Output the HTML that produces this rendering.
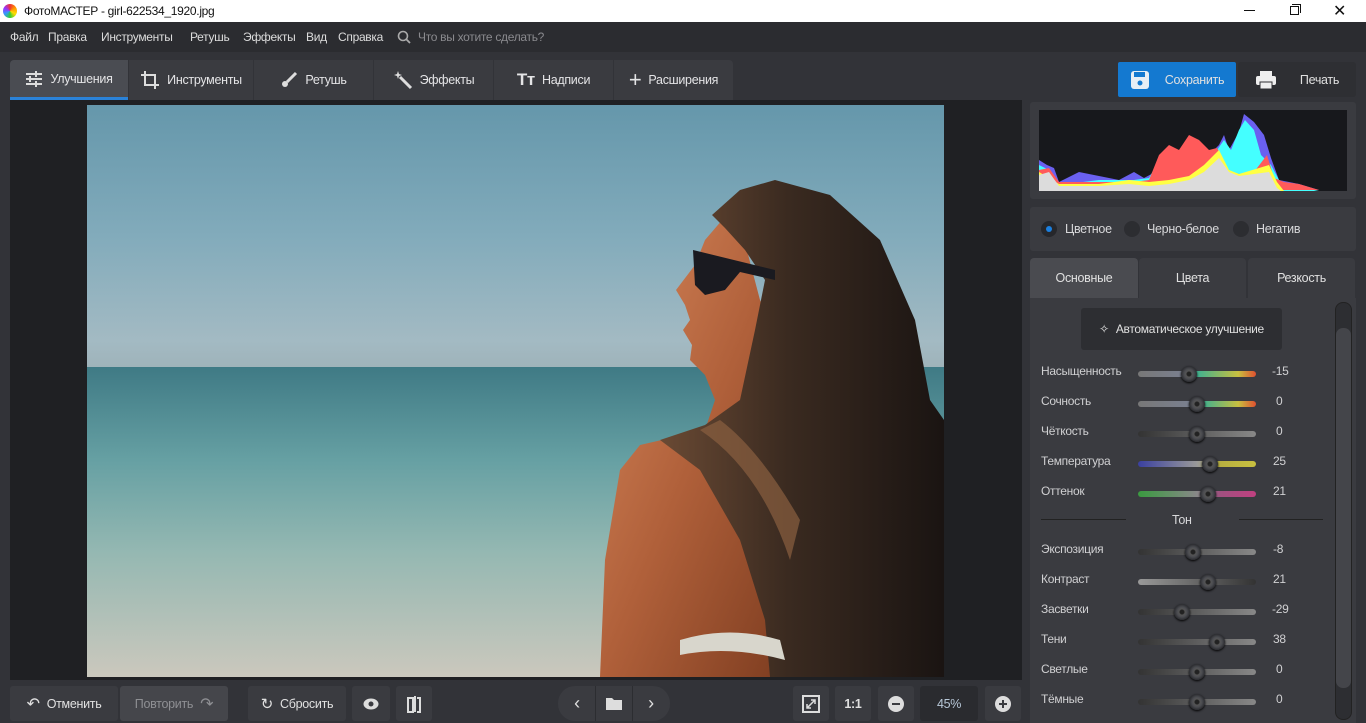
<!DOCTYPE html>
<html><head><meta charset="utf-8"><style>
*{margin:0;padding:0;box-sizing:border-box}
body{width:1366px;height:723px;overflow:hidden;background:#323338;font-family:"Liberation Sans","DejaVu Sans",sans-serif;font-size:12.5px;letter-spacing:-0.3px;color:#d8d8da;position:relative}
.abs{position:absolute}
.title{left:0;top:0;width:1366px;height:22px;background:#fff;color:#111;font-size:12px}
.menu{left:0;top:22px;width:1366px;height:30px;background:#2b2c30}
.menu span{position:absolute;top:8px;font-size:12px;color:#dcdcdc}
.tb{top:60px;height:40px;background:#3a3b40;color:#e4e4e6;display:flex;align-items:center;justify-content:center;gap:7px;font-size:12.5px}
.btn{background:#3a3b40;border-radius:3px;display:flex;align-items:center;justify-content:center;color:#e0e0e0;font-size:12.5px;gap:7px}
.lbl{position:absolute;left:1041px;font-size:12px;color:#d0d0d2}
.val{position:absolute;left:1276px;font-size:12px;color:#d0d0d2}
.tr{position:absolute;left:1138px;width:118px;height:6px;border-radius:3px}
.kn{position:absolute;width:16px;height:16px;border-radius:50%;background:radial-gradient(circle,#222 0 2px,#555 3px,#4a4b50 5px,#2a2b2f 8px);box-shadow:0 1px 2px #000}
</style></head><body>
<div class="abs title">
 <div class="abs" style="left:3px;top:4px;width:14px;height:14px;border-radius:50%;background:conic-gradient(#e33,#f90,#fd0,#3c3,#39f,#93f,#e33)"></div>
 <span class="abs" style="left:24px;top:4px">ФотоМАСТЕР - girl-622534_1920.jpg</span>
 <div class="abs" style="left:1244px;top:10px;width:11px;height:1px;background:#111"></div>
 <div class="abs" style="left:1290px;top:6px;width:9px;height:9px;border:1px solid #111"></div>
 <div class="abs" style="left:1292px;top:4px;width:9px;height:9px;border-top:1px solid #111;border-right:1px solid #111"></div>
 <span class="abs" style="left:1333px;top:1px;font-size:16px;color:#111">✕</span>
</div>
<div class="abs menu">
 <span style="left:10px">Файл</span><span style="left:48px">Правка</span><span style="left:101px">Инструменты</span><span style="left:190px">Ретушь</span><span style="left:243px">Эффекты</span><span style="left:306px">Вид</span><span style="left:338px">Справка</span>
 <svg class="abs" style="left:397px;top:8px" width="14" height="14"><circle cx="6" cy="6" r="4.5" stroke="#aaa" stroke-width="1.6" fill="none"/><line x1="9.5" y1="9.5" x2="13" y2="13" stroke="#aaa" stroke-width="1.8"/></svg>
 <span style="left:418px;color:#8a8a8e">Что вы хотите сделать?</span>
</div>
<div class="abs tb" style="left:10px;width:118px;background:#4a4c52;border-radius:4px 0 0 0;border-bottom:3px solid #2a82d8">
 <svg width="18" height="16"><g stroke="#ddd" stroke-width="2"><line x1="1" y1="3" x2="17" y2="3"/><line x1="1" y1="8" x2="17" y2="8"/><line x1="1" y1="13" x2="17" y2="13"/></g><g fill="#ddd"><rect x="10" y="0" width="2" height="6"/><rect x="4" y="5" width="2" height="6"/><rect x="10" y="10" width="2" height="6"/></g></svg>Улучшения</div>
<div class="abs tb" style="left:129px;width:124px"><svg width="20" height="20"><path d="M5 1v14h14M1 5h14v14" stroke="#ddd" stroke-width="2" fill="none"/></svg>Инструменты</div>
<div class="abs tb" style="left:254px;width:119px"><svg width="18" height="18"><path d="M16 2L7 11" stroke="#ddd" stroke-width="3"/><circle cx="5" cy="13" r="3" fill="#ddd"/></svg>Ретушь</div>
<div class="abs tb" style="left:374px;width:119px"><svg width="20" height="20"><path d="M7 7L18 18" stroke="#ddd" stroke-width="3"/><path d="M5 1l1 3 3 1-3 1-1 3-1-3-3-1 3-1z" fill="#ddd"/></svg>Эффекты</div>
<div class="abs tb" style="left:494px;width:119px"><b style="font-size:17px">Tт</b>Надписи</div>
<div class="abs tb" style="left:614px;width:119px;border-radius:0 4px 0 0"><span style="font-size:22px;font-weight:300">+</span>Расширения</div>
<div class="abs btn" style="left:1118px;top:62px;width:118px;height:35px;background:#1479d0;border-radius:2px"><svg width="20" height="20"><rect x="1" y="1" width="18" height="18" rx="3" fill="#e8eef5"/><rect x="4" y="2" width="11" height="5" fill="#1479d0"/><circle cx="10" cy="13" r="2.5" fill="#1479d0"/></svg><span style="margin-left:8px">Сохранить</span></div>
<div class="abs btn" style="left:1238px;top:62px;width:118px;height:35px;background:#2e2f33"><svg width="22" height="20"><rect x="5" y="1" width="12" height="5" fill="#eee"/><rect x="1" y="6" width="20" height="9" rx="2" fill="#eee"/><rect x="5" y="12" width="12" height="7" fill="#eee" stroke="#2e2f33"/></svg><span style="margin-left:16px">Печать</span></div>
<div class="abs" style="left:10px;top:100px;width:1012px;height:580px;background:#1f2023"></div>
<svg class="abs" style="left:87px;top:105px" width="857" height="572" viewBox="87 105 857 572">
<defs>
<linearGradient id="sky" x1="0" y1="0" x2="0" y2="1"><stop offset="0" stop-color="#6597ab"/><stop offset=".5" stop-color="#82abbb"/><stop offset=".9" stop-color="#a3bac3"/><stop offset="1" stop-color="#9fb3ba"/></linearGradient>
<linearGradient id="sea" x1="0" y1="0" x2="0" y2="1"><stop offset="0" stop-color="#3f7a85"/><stop offset=".3" stop-color="#66a0a3"/><stop offset=".6" stop-color="#95b8b2"/><stop offset="1" stop-color="#cbc8bd"/></linearGradient>
<linearGradient id="skin" x1="0" y1="0" x2="1" y2="1"><stop offset="0" stop-color="#d98a5e"/><stop offset=".5" stop-color="#b0603a"/><stop offset="1" stop-color="#7a3a1e"/></linearGradient>
<linearGradient id="hair" x1="0" y1="0" x2="1" y2="0"><stop offset="0" stop-color="#6a4a34"/><stop offset=".45" stop-color="#3a2a20"/><stop offset="1" stop-color="#1a1412"/></linearGradient>
</defs>
<rect x="87" y="105" width="857" height="262" fill="url(#sky)"/>
<rect x="87" y="367" width="857" height="310" fill="url(#sea)"/>
<polygon fill="url(#skin)" points="735,205 705,240 695,265 676,290 685,305 690,320 683,330 692,345 690,360 705,375 715,400 705,430 640,445 620,470 605,560 600,677 800,677 800,400 760,300"/>
<polygon fill="url(#hair)" points="712,215 740,190 775,180 830,195 880,240 915,320 930,400 944,420 944,677 770,677 765,620 740,540 700,470 660,440 705,425 740,400 755,330 765,280 745,250 725,228"/>
<path d="M700 430 Q760 470 790 560 L800 520 Q760 450 720 420 Z" fill="#8a6040" opacity=".7"/>
<path d="M693 250 L775 270 L775 280 L740 272 L725 290 L705 295 L695 285 Z" fill="#1a1a20"/>
<path d="M680 640 Q730 625 780 640 L785 660 Q730 645 680 655 Z" fill="#d8d6cc"/>
</svg>
<div class="abs btn" style="left:10px;top:686px;width:108px;height:35px"><span style="font-size:16px">↶</span>Отменить</div>
<div class="abs btn" style="left:120px;top:686px;width:108px;height:35px;background:#45464b;color:#8e8f93">Повторить <span style="font-size:16px">↷</span></div>
<div class="abs btn" style="left:248px;top:686px;width:98px;height:35px"><span style="font-size:15px">↻</span>Сбросить</div>
<div class="abs btn" style="left:352px;top:686px;width:38px;height:35px"><svg width="16" height="12"><ellipse cx="8" cy="6" rx="7.5" ry="5.5" fill="#ddd"/><circle cx="8" cy="6" r="2.5" fill="#3a3b40"/></svg></div>
<div class="abs btn" style="left:396px;top:686px;width:36px;height:35px"><svg width="14" height="18"><path d="M1 3h5v14H1zM8 1v16M10 3h3v14h-3" stroke="#ddd" stroke-width="2" fill="none"/></svg></div>
<div class="abs btn" style="left:558px;top:686px;width:112px;height:35px;border-radius:17px;gap:0"><span style="width:36px;text-align:center;font-size:18px">‹</span><span style="width:38px;height:35px;border-left:1px solid #2c2d31;border-right:1px solid #2c2d31;display:flex;align-items:center;justify-content:center"><svg width="16" height="13"><path d="M0 1h6l2 2h8v10H0z" fill="#ddd"/></svg></span><span style="width:36px;text-align:center;font-size:18px">›</span></div>
<div class="abs btn" style="left:793px;top:686px;width:36px;height:35px"><svg width="18" height="18"><rect x="1" y="1" width="16" height="16" fill="none" stroke="#ddd" stroke-width="2"/><path d="M5 13L13 5M9 5h4v4M5 9v4h4" stroke="#ddd" stroke-width="1.5" fill="none"/></svg></div>
<div class="abs btn" style="left:835px;top:686px;width:36px;height:35px;font-weight:bold">1:1</div>
<div class="abs btn" style="left:878px;top:686px;width:36px;height:35px"><svg width="16" height="16"><circle cx="8" cy="8" r="8" fill="#ddd"/><rect x="4" y="7" width="8" height="2" fill="#3a3b40"/></svg></div>
<div class="abs btn" style="left:920px;top:686px;width:58px;height:35px;background:#2a2b2f;color:#b8c8d8">45%</div>
<div class="abs btn" style="left:985px;top:686px;width:36px;height:35px"><svg width="16" height="16"><circle cx="8" cy="8" r="8" fill="#ddd"/><rect x="4" y="7" width="8" height="2" fill="#3a3b40"/><rect x="7" y="4" width="2" height="8" fill="#3a3b40"/></svg></div>
<div class="abs" style="left:1030px;top:102px;width:326px;height:97px;background:#3a3b40;border-radius:3px"></div>
<svg class="abs" style="left:1039px;top:110px" width="308" height="81" viewBox="0 0 308 81">
<rect width="308" height="81" fill="#17181c"/>
<path d="M0 50 L8 55 L15 58 L20 72 L40 62 L60 66 L80 70 L95 62 L105 68 L120 60 L130 55 L140 42 L150 50 L160 40 L170 45 L180 35 L185 25 L190 40 L200 22 L205 4 L215 12 L225 25 L232 48 L240 70 L260 74 L280 80 L0 80Z" fill="#6a60f0"/>
<path d="M0 55 L10 60 L20 75 L60 70 L95 70 L110 68 L120 50 L140 45 L150 48 L160 40 L178 40 L185 30 L192 40 L200 20 L206 10 L215 20 L222 45 L232 55 L240 70 L250 75 L280 81 L0 81Z" fill="#4ff"/>
<path d="M0 60 L10 58 L20 72 L60 72 L95 72 L110 70 L120 45 L130 35 L140 40 L150 25 L160 30 L170 40 L178 38 L182 45 L188 60 L200 64 L215 62 L228 45 L235 68 L245 72 L260 74 L280 80 L0 80Z" fill="#ff5a5a"/>
<path d="M0 62 L20 74 L60 74 L90 70 L110 72 L130 70 L150 66 L165 55 L180 40 L190 60 L200 64 L230 55 L238 72 L245 81 L0 81Z" fill="#ffff44"/>
<path d="M0 65 L10 62 L20 76 L60 76 L90 74 L110 76 L130 74 L150 70 L165 62 L180 48 L190 62 L200 66 L230 62 L238 78 L242 81 L0 81Z" fill="#dcdcdc"/>
</svg>
<div class="abs" style="left:1030px;top:207px;width:326px;height:44px;background:#3a3b40;border-radius:3px"></div>
<div class="abs" style="left:1041px;top:221px;width:16px;height:16px;border-radius:50%;background:#26272b"><div style="margin:5px;width:6px;height:6px;border-radius:50%;background:#1b80e0"></div></div>
<span class="abs" style="left:1065px;top:222px">Цветное</span>
<div class="abs" style="left:1124px;top:221px;width:16px;height:16px;border-radius:50%;background:#2c2d31"></div>
<span class="abs" style="left:1147px;top:222px">Черно-белое</span>
<div class="abs" style="left:1233px;top:221px;width:16px;height:16px;border-radius:50%;background:#2c2d31"></div>
<span class="abs" style="left:1256px;top:222px">Негатив</span>
<div class="abs btn" style="left:1030px;top:258px;width:108px;height:40px;background:#4a4b50;border-radius:4px 4px 0 0">Основные</div>
<div class="abs btn" style="left:1139px;top:258px;width:107px;height:40px;border-radius:4px 4px 0 0">Цвета</div>
<div class="abs btn" style="left:1248px;top:258px;width:107px;height:40px;border-radius:4px 4px 0 0">Резкость</div>
<div class="abs" style="left:1030px;top:298px;width:326px;height:425px;background:#3a3b40"></div>
<div class="abs btn" style="left:1081px;top:308px;width:201px;height:42px;background:#2d2e32;font-size:12px"><span>✧</span>Автоматическое улучшение</div>
<div class="abs" style="left:1335px;top:302px;width:17px;height:418px;border-radius:8px;background:#2d2e32;border:1px solid #222"></div>
<div class="abs" style="left:1336px;top:328px;width:15px;height:360px;border-radius:7px;background:#44454a"></div>
<span class="lbl" style="top:364px">Насыщенность</span><div class="tr" style="top:371px;background:linear-gradient(90deg,#777,#7a8090 40%,#40b090 50%,#c8c040 85%,#e05030)"></div><div class="kn" style="left:1181px;top:366px"></div><span class="val" style="left:1272px;top:364px">-15</span>
<span class="lbl" style="top:394px">Сочность</span><div class="tr" style="top:401px;background:linear-gradient(90deg,#777,#7a8090 45%,#40b090 55%,#c8c040 85%,#e05030)"></div><div class="kn" style="left:1189px;top:396px"></div><span class="val" style="top:394px">0</span>
<span class="lbl" style="top:424px">Чёткость</span><div class="tr" style="top:431px;background:linear-gradient(90deg,#333,#888)"></div><div class="kn" style="left:1189px;top:426px"></div><span class="val" style="top:424px">0</span>
<span class="lbl" style="top:454px">Температура</span><div class="tr" style="top:461px;background:linear-gradient(90deg,#3a40a0,#999 50%,#b8b040 70%,#c8c040)"></div><div class="kn" style="left:1202px;top:456px"></div><span class="val" style="left:1273px;top:454px">25</span>
<span class="lbl" style="top:484px">Оттенок</span><div class="tr" style="top:491px;background:linear-gradient(90deg,#3a9a40,#888 50%,#a05080 70%,#c04080)"></div><div class="kn" style="left:1200px;top:486px"></div><span class="val" style="left:1273px;top:484px">21</span>
<div class="abs" style="left:1041px;top:519px;width:85px;height:1px;background:#222"></div><span class="abs" style="left:1172px;top:513px">Тон</span><div class="abs" style="left:1239px;top:519px;width:84px;height:1px;background:#222"></div>
<span class="lbl" style="top:542px">Экспозиция</span><div class="tr" style="top:549px;background:linear-gradient(90deg,#333,#888)"></div><div class="kn" style="left:1185px;top:544px"></div><span class="val" style="left:1273px;top:542px">-8</span>
<span class="lbl" style="top:572px">Контраст</span><div class="tr" style="top:579px;background:linear-gradient(90deg,#999,#333)"></div><div class="kn" style="left:1200px;top:574px"></div><span class="val" style="left:1273px;top:572px">21</span>
<span class="lbl" style="top:602px">Засветки</span><div class="tr" style="top:609px;background:linear-gradient(90deg,#333,#888)"></div><div class="kn" style="left:1174px;top:604px"></div><span class="val" style="left:1272px;top:602px">-29</span>
<span class="lbl" style="top:632px">Тени</span><div class="tr" style="top:639px;background:linear-gradient(90deg,#333,#888)"></div><div class="kn" style="left:1209px;top:634px"></div><span class="val" style="left:1273px;top:632px">38</span>
<span class="lbl" style="top:662px">Светлые</span><div class="tr" style="top:669px;background:linear-gradient(90deg,#333,#888)"></div><div class="kn" style="left:1189px;top:664px"></div><span class="val" style="top:662px">0</span>
<span class="lbl" style="top:692px">Тёмные</span><div class="tr" style="top:699px;background:linear-gradient(90deg,#333,#888)"></div><div class="kn" style="left:1189px;top:694px"></div><span class="val" style="top:692px">0</span>
</body></html>
